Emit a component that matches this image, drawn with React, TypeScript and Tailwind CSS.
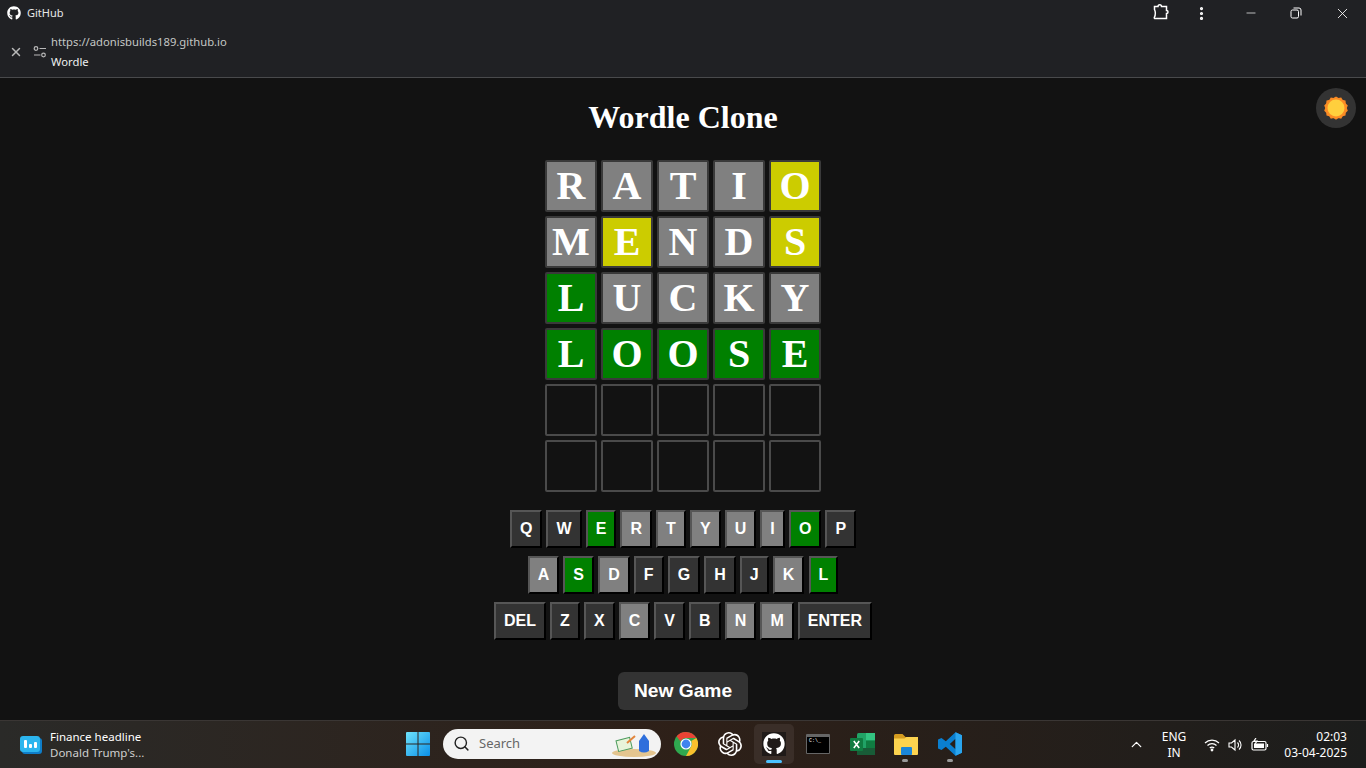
import { Minus, X, MoreVertical, Search, ChevronUp } from "lucide-react";
import { FaGithub } from "react-icons/fa";
import { SiOpenai } from "react-icons/si";

const GRID = [
  ["R", "A", "T", "I", "O"],
  ["M", "E", "N", "D", "S"],
  ["L", "U", "C", "K", "Y"],
  ["L", "O", "O", "S", "E"],
  ["", "", "", "", ""],
  ["", "", "", "", ""],
];

// g = green, y = yellow, x = gray
const STATES = ["xxxxy", "xyxxy", "gxxxx", "ggggg", "     ", "     "];

const KEY_ROWS = [
  [["Q", ""], ["W", ""], ["E", "g"], ["R", "x"], ["T", "x"], ["Y", "x"], ["U", "x"], ["I", "x"], ["O", "g"], ["P", ""]],
  [["A", "x"], ["S", "g"], ["D", "x"], ["F", ""], ["G", ""], ["H", ""], ["J", ""], ["K", "x"], ["L", "g"]],
  [["DEL", ""], ["Z", ""], ["X", ""], ["C", "x"], ["V", ""], ["B", ""], ["N", "x"], ["M", "x"], ["ENTER", ""]],
];

const cellColor = (s: string) => {
  if (s === "g") return "bg-[#008000] border-[#3a3a3a]";
  if (s === "y") return "bg-[#cccc00] border-[#3a3a3a]";
  if (s === "x") return "bg-[#808080] border-[#3a3a3a]";
  return "bg-[#121212] border-[#4a4a4a]";
};

const keyColor = (s: string) => {
  if (s === "g") return "bg-[#008000]";
  if (s === "x") return "bg-[#808080]";
  return "bg-[#333333]";
};

const Sun = () => (
  <svg width="24" height="24" viewBox="0 0 24 24">
    <path
      fill="#fb8c25"
      d="M12 0.5l2.4 1.6 2.8-.6 1.5 2.4 2.8.7.3 2.9 2 2-1 2.6 1 2.6-2 2-.3 2.9-2.8.7-1.5 2.4-2.8-.6-2.4 1.6-2.4-1.6-2.8.6-1.5-2.4-2.8-.7-.3-2.9-2-2 1-2.6-1-2.6 2-2 .3-2.9 2.8-.7 1.5-2.4 2.8.6z"
    />
    <circle cx="12" cy="12" r="10.500" fill="#fb8c25" />
    <circle cx="12" cy="12" r="8.500" fill="#ffcf3d" />
  </svg>
);

const WindowsLogo = () => (
  <svg width="24" height="24" viewBox="0 0 24 24">
    <defs>
      <linearGradient id="winGrad" x1="0" y1="0" x2="1" y2="1">
        <stop offset="0" stopColor="#6fe3fb" />
        <stop offset="1" stopColor="#0a8fe8" />
      </linearGradient>
    </defs>
    <path fill="url(#winGrad)" d="M0 1a1 1 0 0 1 1-1h10.500v11.500H0zM12.500 0H23a1 1 0 0 1 1 1v10.500H12.500zM0 12.500h11.500V24H1a1 1 0 0 1-1-1zM12.500 12.500H24V23a1 1 0 0 1-1 1H12.500z" />
  </svg>
);

const ChromeLogo = () => (
  <svg width="24" height="24" viewBox="0 0 24 24">
    <circle cx="12" cy="12" r="12" fill="#2fa84f" />
    <path fill="#ea4335" d="M12 0a12 12 0 0 1 10.400 6H12a6 6 0 0 0-5.500 3.600L2.600 4.300A12 12 0 0 1 12 0z" />
    <path fill="#fbc02d" d="M22.400 6A12 12 0 0 1 12 24l4.700-8.800A6 6 0 0 0 17.200 9z" />
    <circle cx="12" cy="12" r="5.600" fill="#fff" />
    <circle cx="12" cy="12" r="4.400" fill="#3f83ee" />
  </svg>
);

const ExcelLogo = () => (
  <svg width="26" height="24" viewBox="0 0 26 24">
    <rect x="7" y="1" width="18" height="22" rx="1.500" fill="#21a366" />
    <rect x="16" y="1" width="9" height="7.500" fill="#33c481" />
    <rect x="16" y="8.500" width="9" height="7.500" fill="#107c41" />
    <rect x="7" y="16" width="18" height="7" fill="#185c37" />
    <rect x="0" y="6" width="13" height="13" rx="1" fill="#107c41" />
    <path stroke="#fff" strokeWidth="1.600" d="M3.800 9l5.400 7M9.200 9l-5.400 7" />
  </svg>
);

const FolderLogo = () => (
  <svg width="26" height="24" viewBox="0 0 26 24">
    <path fill="#d59c20" d="M1 3.500A1.500 1.500 0 0 1 2.500 2h7l3 3H24a1 1 0 0 1 1 1v3H1z" />
    <path fill="#fcd34f" d="M1 6.500h10.500l2-1.500H25v17a1 1 0 0 1-1 1H2a1 1 0 0 1-1-1z" />
    <rect x="8" y="15" width="11" height="8" rx="1" fill="#1a86d9" />
  </svg>
);

const VsCodeLogo = () => (
  <svg width="24" height="24" viewBox="0 0 24 24">
    <path fill="#0a7fd0" d="M17.500 0.300 24 3.200v17.600l-6.500 2.900-9.700-8.900-4.300 3.300L0 16.500V7.500l3.500-1.600 4.300 3.300zM17.500 6.700l-5.700 5.300 5.700 5.300z" />
    <path fill="#2aa5ee" d="M17.500 0.300 24 3.200v17.600l-6.500 2.900z" />
  </svg>
);

const App = () => {
  return (
    <div className="h-screen w-full overflow-hidden flex flex-col bg-[#121212] font-['Noto_Sans',sans-serif]">
      {/* Title bar */}
      <div className="h-[78px] shrink-0 bg-[#202124] border-b border-[#494a4c] flex flex-col text-[#e8e8e8]">
        <div className="h-[26px] flex items-center pl-[7px]">
          <FaGithub size={14} className="text-white" />
          <span className="ml-[6px] text-[11px]">GitHub</span>
          <div className="ml-auto flex items-center">
            <svg width="18" height="18" viewBox="0 0 18 18" fill="none" stroke="#fff" strokeWidth="1.500" className="mr-[23px] -mt-[2px]">
              <path d="M2.500 3.500H6c0-2.500 3.500-2.500 3.500 0h5v4c2 0 2 3 0 3v5H3c-.5 0-.7-.4-.7-1 1.200-2.500 1.200-6 .2-8z" />
            </svg>
            <MoreVertical size={17} strokeWidth={2.500} className="mr-[34px] text-white" />
            <Minus size={14} strokeWidth={1.200} className="mr-[32px] text-white" />
            <svg width="12" height="12" viewBox="0 0 12 12" fill="none" stroke="#fff" className="mr-[32px]">
              <rect x="1" y="3" width="7.500" height="8" rx="1.500" />
              <path d="M3.500 1h5.500a2 2 0 0 1 2 2v5.500" />
            </svg>
            <X size={17} strokeWidth={1.200} className="mr-[15px] text-white" />
          </div>
        </div>
        <div className="flex-1 flex items-center pl-[9px]">
          <X size={14} strokeWidth={2.500} className="text-[#b8b8b8]" />
          <svg width="14" height="14" viewBox="0 0 14 14" fill="none" stroke="#b8b8b8" strokeWidth="1.200" className="ml-[10px]">
            <circle cx="3" cy="3.500" r="1.800" />
            <path d="M6.500 3.500H13M1 10h6.500" />
            <circle cx="10.500" cy="10" r="1.800" />
          </svg>
          <div className="ml-[4px] mt-[1px] flex flex-col text-[11.250px] leading-[20px]">
            <span className="text-[#c4c7c5]">https://adonisbuilds189.github.io</span>
            <span className="text-[#eef0f0]">Wordle</span>
          </div>
        </div>
      </div>

      {/* Game */}
      <main className="relative flex-1 flex flex-col items-center font-['Liberation_Sans',sans-serif]">
        <h1 className="mt-[21px] h-[37px] leading-[37px] text-[32px] font-bold text-white font-['Liberation_Serif',serif]">
          Wordle Clone
        </h1>
        <button className="absolute top-[10px] right-[10px] w-10 h-10 rounded-full bg-[#333333] flex items-center justify-center">
          <Sun />
        </button>

        <div className="mt-[24px] flex flex-col gap-1">
          {GRID.map((row, r) => (
            <div key={r} className="flex gap-1">
              {row.map((ch, c) => (
                <div
                  key={c}
                  className={`w-[52px] h-[52px] border-2 rounded-[2px] flex items-center justify-center text-[40px] font-bold text-white font-['Liberation_Serif',serif] ${cellColor(STATES[r][c])}`}
                >
                  {ch}
                </div>
              ))}
            </div>
          ))}
        </div>

        <div className="mt-[18px] flex flex-col gap-2 items-center">
          {KEY_ROWS.map((row, r) => (
            <div key={r} className="flex gap-[4.100px]">
              {row.map(([label, s]) => (
                <button
                  key={label}
                  className={`h-[38px] px-2 border-2 border-t-[#565656] border-l-[#565656] border-r-black border-b-black text-base font-bold text-white ${keyColor(s)}`}
                >
                  {label}
                </button>
              ))}
            </div>
          ))}
        </div>

        <button className="mt-[32px] w-[130px] h-[38px] rounded-md bg-[#333333] text-white text-[19.200px] font-bold">
          New Game
        </button>
      </main>

      {/* Taskbar */}
      <footer className="h-12 shrink-0 flex items-center relative border-t border-[#3a3634] bg-gradient-to-r from-[#2a2a28] via-[#2e2018] to-[#1c1d1c]">
        <div className="w-[400px] flex items-center pl-[20px]">
          <svg width="22" height="18" viewBox="0 0 22 18">
            <rect x="2" y="2" width="20" height="16" rx="3" fill="#0f7ec9" />
            <rect x="0" y="0" width="20" height="16" rx="3" fill="#2cb5ee" />
            <rect x="4" y="4" width="3" height="8" rx="1" fill="#fff" />
            <rect x="9" y="8" width="3" height="4" rx="1" fill="#fff" />
            <rect x="14" y="6" width="3" height="6" rx="1" fill="#fff" />
          </svg>
          <div className="ml-[8px] flex flex-col text-[11.500px] leading-4">
            <span className="text-white">Finance headline</span>
            <span className="text-[#cfcfcf]">Donald Trump's...</span>
          </div>
        </div>

        <div className="absolute left-[406px] -top-[1px] h-full flex items-center">
          <WindowsLogo />
          <div className="ml-[13px] w-[218px] h-[30px] rounded-full bg-[#f3f3f3] flex items-center pl-[10px] relative">
            <Search size={17} strokeWidth={2} className="text-[#222]" />
            <span className="ml-[9px] text-[13px] text-[#666]">Search</span>
            <svg width="46" height="30" viewBox="0 0 46 30" className="absolute right-[4px] top-0">
              <ellipse cx="23" cy="24" rx="22" ry="4" fill="#e4c58f" />
              <rect x="6" y="10" width="14" height="11" fill="#e8f3da" stroke="#4b9a5c" transform="rotate(-14 13 15)" />
              <path d="M16 14l8-7" stroke="#e2853c" strokeWidth="2" />
              <path d="M28 22v-10l5-7 5 7v10q-5 3-10 0z" fill="#2f6fdc" />
            </svg>
          </div>
          <div className="ml-[13px] w-6 flex justify-center"><ChromeLogo /></div>
          <div className="ml-[20px] w-6 flex justify-center"><SiOpenai size={24} className="text-white" /></div>
          <div className="ml-[12px] w-10 h-10 rounded-[5px] bg-[#3a2e28] flex items-center justify-center relative">
            <div className="w-6 h-6 bg-[#1f1a18] flex items-center justify-center"><FaGithub size={22} className="text-white" /></div>
            <div className="absolute bottom-[1px] left-[12px] w-4 h-[3px] rounded-full bg-[#4cc2ff]" />
          </div>
          <div className="ml-[12px] w-[24px] h-[20px] bg-black border border-[#666] rounded-[1px] border-t-[3px] flex items-start pl-[2px]">
            <span className="text-[5px] leading-[8px] text-white font-['Liberation_Mono',monospace]">C:\_</span>
          </div>
          <div className="ml-[20px] relative"><ExcelLogo /></div>
          <div className="ml-[17px] relative">
            <FolderLogo />
            <div className="absolute -bottom-[6px] left-[9px] w-[6px] h-[3px] rounded-full bg-[#9a9a9a]" />
          </div>
          <div className="ml-[19px] relative">
            <VsCodeLogo />
            <div className="absolute -bottom-[6px] left-[9px] w-[6px] h-[3px] rounded-full bg-[#9a9a9a]" />
          </div>
        </div>

        <div className="ml-auto flex items-center text-white text-xs">
          <ChevronUp size={17} strokeWidth={1.800} />
          <div className="ml-[17px] flex flex-col items-center leading-4">
            <span>ENG</span>
            <span>IN</span>
          </div>
          <svg width="16" height="14" viewBox="0 0 16 14" fill="none" stroke="#fff" strokeWidth="1.200" className="ml-[18px]">
            <path d="M1 5a10 10 0 0 1 14 0M3.500 7.500a6.500 6.500 0 0 1 9 0M5.800 10a3 3 0 0 1 4.400 0" />
            <circle cx="8" cy="12" r=".8" fill="#fff" />
          </svg>
          <svg width="16" height="14" viewBox="0 0 16 14" fill="none" stroke="#fff" strokeWidth="1.100" className="ml-[8px]">
            <path d="M1 5v4h2.500L7 12V2L3.500 5zM9.500 4.500a3.500 3.500 0 0 1 0 5M11 2.500a6 6 0 0 1 0 9" />
          </svg>
          <svg width="18" height="14" viewBox="0 0 18 14" fill="none" stroke="#fff" strokeWidth="1.200" className="ml-[7px]">
            <rect x="1" y="3.500" width="14" height="8.500" rx="1.500" />
            <path d="M16.500 6v3" />
            <rect x="3" y="5.500" width="10" height="4.500" fill="#fff" stroke="none" />
            <path d="M5 0L3 3h3L4 6" />
          </svg>
          <div className="ml-[15px] mr-[19px] flex flex-col items-end leading-4">
            <span>02:03</span>
            <span>03-04-2025</span>
          </div>
        </div>
      </footer>
    </div>
  );
};

export default App;
